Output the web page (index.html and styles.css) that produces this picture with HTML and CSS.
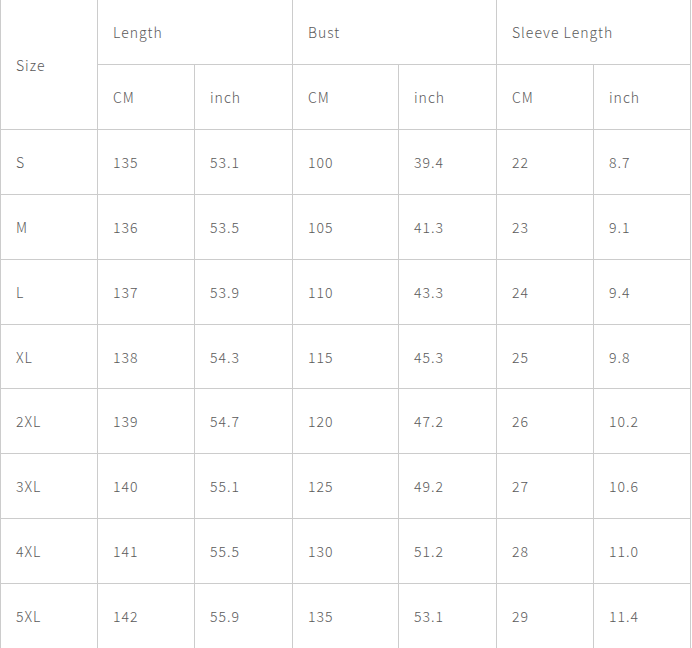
FILE: index.html
```html
<!DOCTYPE html>
<html lang="en">
<head>
<meta charset="utf-8">
<title>Size Chart</title>
<link rel="stylesheet" href="styles.css">
</head>
<body>
<div class="chart" role="table">
  <div class="cell size-head">Size</div>
  <div class="cell group">Length</div>
  <div class="cell group">Bust</div>
  <div class="cell group">Sleeve Length</div>
  <div class="cell">CM</div><div class="cell">inch</div>
  <div class="cell">CM</div><div class="cell">inch</div>
  <div class="cell">CM</div><div class="cell">inch</div>

  <div class="cell">S</div><div class="cell">135</div><div class="cell">53.1</div><div class="cell">100</div><div class="cell">39.4</div><div class="cell">22</div><div class="cell">8.7</div>
  <div class="cell">M</div><div class="cell">136</div><div class="cell">53.5</div><div class="cell">105</div><div class="cell">41.3</div><div class="cell">23</div><div class="cell">9.1</div>
  <div class="cell">L</div><div class="cell">137</div><div class="cell">53.9</div><div class="cell">110</div><div class="cell">43.3</div><div class="cell">24</div><div class="cell">9.4</div>
  <div class="cell">XL</div><div class="cell">138</div><div class="cell">54.3</div><div class="cell">115</div><div class="cell">45.3</div><div class="cell">25</div><div class="cell">9.8</div>
  <div class="cell">2XL</div><div class="cell">139</div><div class="cell">54.7</div><div class="cell">120</div><div class="cell">47.2</div><div class="cell">26</div><div class="cell">10.2</div>
  <div class="cell">3XL</div><div class="cell">140</div><div class="cell">55.1</div><div class="cell">125</div><div class="cell">49.2</div><div class="cell">27</div><div class="cell">10.6</div>
  <div class="cell">4XL</div><div class="cell">141</div><div class="cell">55.5</div><div class="cell">130</div><div class="cell">51.2</div><div class="cell">28</div><div class="cell">11.0</div>
  <div class="cell">5XL</div><div class="cell">142</div><div class="cell">55.9</div><div class="cell">135</div><div class="cell">53.1</div><div class="cell">29</div><div class="cell">11.4</div>
</div>
</body>
</html>
```

FILE: styles.css
```css
html, body {
  margin: 0;
  padding: 0;
  background: #ffffff;
}

.chart {
  display: grid;
  width: 691px;
  grid-template-columns: 97px 97px 98px 106px 98px 97px 97px;
  grid-template-rows: 65px 65px 65px 65px 65px 64px 65px 65px 65px 65px;
  border-left: 1px solid #cccccc;
  font-family: "Noto Sans CJK SC", "Noto Sans", sans-serif;
  font-size: 14px;
  font-weight: 300;
  letter-spacing: 1px;
  color: #5a5a5a;
}

.cell {
  display: flex;
  align-items: center;
  padding-left: 15px;
  border-right: 1px solid #cccccc;
  border-bottom: 1px solid #cccccc;
  white-space: nowrap;
}

.size-head {
  grid-row: span 2;
}

.group {
  grid-column: span 2;
}
```
